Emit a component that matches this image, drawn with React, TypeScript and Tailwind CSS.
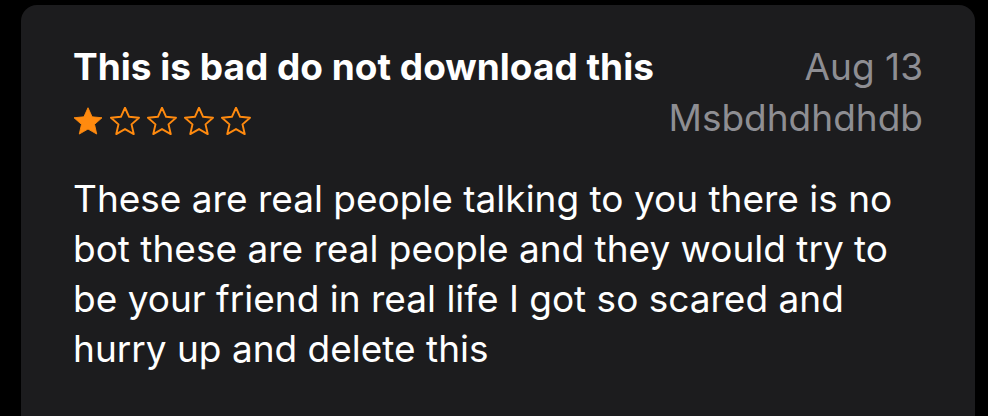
import React from "react";

function Star({ filled }: { filled: boolean }) {
  return (
    <svg width="30" height="28" viewBox="2.1 2.1 19.8 18.8" className="shrink-0">
      <path
        d="M12 2.6l2.75 6.1 6.65.62-5.02 4.43 1.48 6.52L12 16.9l-5.86 3.37 1.48-6.52L2.6 9.32l6.65-.62z"
        fill={filled ? "#ff8a0f" : "none"}
        stroke="#ff8a0f"
        strokeWidth={filled ? 0.6 : 1.3}
        strokeLinejoin="round"
      />
    </svg>
  );
}

export default function App() {
  return (
    <div className="w-[988px] h-[416px] bg-black pt-[5px] pl-[21px] pr-[13px] overflow-hidden" style={{ fontFamily: "Inter, 'Noto Sans', sans-serif" }}>
      <div className="h-[440px] bg-[#1c1c1e] rounded-[16px] pl-[52px] pr-[52px] pt-[40px]">
        <div className="flex justify-between items-start">
          <div className="flex flex-col">
            <div className="text-[37px] leading-[44px] font-bold text-white">This is bad do not download this</div>
            <div className="flex gap-[7px] mt-[18px]">
              <Star filled />
              <Star filled={false} />
              <Star filled={false} />
              <Star filled={false} />
              <Star filled={false} />
            </div>
          </div>
          <div className="flex flex-col items-end text-[#8e8e93] text-[37px] leading-[44px]">
            <div>Aug 13</div>
            <div className="mt-[7px]">Msbdhdhdhdb</div>
          </div>
        </div>
        <p className="mt-[34px] text-white text-[37px] leading-[50px] w-[838px]">
          These are real people talking to you there is no bot these are real people and they would try to be your friend in real life I got so scared and hurry up and delete this
        </p>
      </div>
    </div>
  );
}
